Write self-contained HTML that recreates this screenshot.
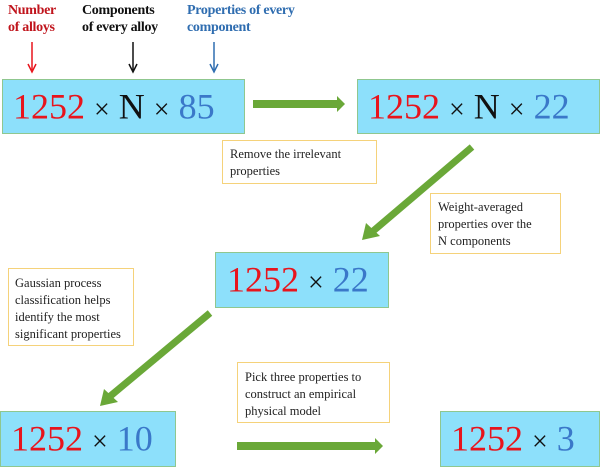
<!DOCTYPE html>
<html><head><style>
body{margin:0;width:600px;height:467px;background:#fff;position:relative;overflow:hidden;font-family:"Liberation Serif",serif}
.b{position:absolute;background:#8de0fb;border:1px solid #8fc78f;box-sizing:border-box;font-size:36px;line-height:1;white-space:nowrap}
.b span{position:absolute;top:50%;transform:translateY(-52%)}
.r{color:#e8141c}.u{color:#3a78c9}.k{color:#111}
.x{font-size:28px}
.t{position:absolute;border:1px solid #f5d27a;background:#fff;box-sizing:border-box;font-size:12.5px;line-height:17px;color:#222;padding:6px 7px;white-space:nowrap}
.l{position:absolute;font-weight:bold;font-size:14px;line-height:17px;letter-spacing:-0.3px}
</style></head><body>
<div class="l" style="left:8px;top:2px;color:#c0141c">Number<br>of alloys</div>
<div class="l" style="left:82px;top:2px;color:#111">Components<br>of every alloy</div>
<div class="l" style="left:187px;top:2px;color:#2f6db0">Properties of every<br>component</div>
<svg width="600" height="467" style="position:absolute;left:0;top:0">
<g stroke-width="1.5">
<line x1="32" y1="42" x2="32" y2="70" stroke="#e8141c"/><path d="M28 64 L32 72 L36 64" fill="none" stroke="#e8141c"/>
<line x1="133" y1="42" x2="133" y2="70" stroke="#111"/><path d="M129 64 L133 72 L137 64" fill="none" stroke="#111"/>
<line x1="214" y1="42" x2="214" y2="70" stroke="#2f6db0"/><path d="M210 64 L214 72 L218 64" fill="none" stroke="#2f6db0"/>
</g>
<g fill="#6aa838">
<polygon points="253,100 337,100 337,96 345,104 337,112 337,108 253,108"/>
<polygon points="237,442 375,442 375,438 383,446 375,454 375,450 237,450"/>
</g>
<g stroke="#6aa838" stroke-width="7" fill="none">
<line x1="472" y1="147" x2="372" y2="232"/>
<line x1="210" y1="313" x2="108" y2="398"/>
</g>
<g fill="#6aa838">
<polygon points="362,240 366,223 380,236"/>
<polygon points="100,406 104,389 118,402"/>
</g>
</svg>
<div class="b" style="left:2px;top:79px;width:243px;height:55px"><span style="left:10px"><b style="font-weight:normal" class="r">1252</b> <i style="font-style:normal" class="k x">×</i> <b style="font-weight:normal" class="k">N</b> <i style="font-style:normal" class="k x">×</i> <b style="font-weight:normal" class="u">85</b></span></div>
<div class="b" style="left:357px;top:79px;width:243px;height:55px"><span style="left:10px"><b style="font-weight:normal" class="r">1252</b> <i style="font-style:normal" class="k x">×</i> <b style="font-weight:normal" class="k">N</b> <i style="font-style:normal" class="k x">×</i> <b style="font-weight:normal" class="u">22</b></span></div>
<div class="b" style="left:215px;top:252px;width:174px;height:56px"><span style="left:11px"><b style="font-weight:normal" class="r">1252</b> <i style="font-style:normal" class="k x">×</i> <b style="font-weight:normal" class="u">22</b></span></div>
<div class="b" style="left:0px;top:411px;width:176px;height:56px"><span style="left:10px"><b style="font-weight:normal" class="r">1252</b> <i style="font-style:normal" class="k x">×</i> <b style="font-weight:normal" class="u">10</b></span></div>
<div class="b" style="left:440px;top:411px;width:160px;height:56px"><span style="left:10px"><b style="font-weight:normal" class="r">1252</b> <i style="font-style:normal" class="k x">×</i> <b style="font-weight:normal" class="u">3</b></span></div>
<div class="t" style="left:222px;top:140px;width:155px;height:44px;padding-top:5px">Remove the irrelevant<br>properties</div>
<div class="t" style="left:430px;top:193px;width:131px;height:61px;padding-top:5px">Weight-averaged<br>properties over the<br>N components</div>
<div class="t" style="left:8px;top:268px;width:126px;height:78px;padding-top:6px;padding-left:6px">Gaussian process<br>classification helps<br>identify the most<br>significant properties</div>
<div class="t" style="left:237px;top:362px;width:153px;height:61px;padding-top:6px">Pick three properties to<br>construct an empirical<br>physical model</div>
</body></html>
